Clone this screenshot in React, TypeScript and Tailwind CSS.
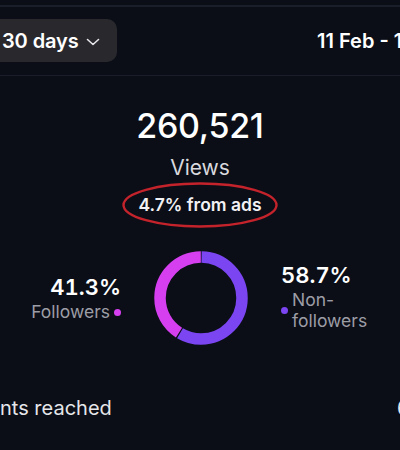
import React from "react";

function Donut() {
  const r = 41;
  const c = 2 * Math.PI * r;
  const pink = 0.413;
  const gap = 1.2;
  return (
    <svg width="96" height="96" viewBox="0 0 96 96" className="shrink-0">
      <g transform="rotate(-90 48 48)">
        <circle
          cx="48"
          cy="48"
          r={r}
          fill="none"
          stroke="#7b45f2"
          strokeWidth="11.5"
          strokeDasharray={`${c * (1 - pink) - gap} ${c}`}
          strokeDashoffset={-gap / 2}
        />
        <circle
          cx="48"
          cy="48"
          r={r}
          fill="none"
          stroke="#d63ff0"
          strokeWidth="11.5"
          strokeDasharray={`${c * pink - gap} ${c}`}
          strokeDashoffset={-(c * (1 - pink) + gap / 2)}
        />
      </g>
    </svg>
  );
}

export default function App() {
  return (
    <div
      className="w-[400px] h-[450px] bg-[#0b0e17] overflow-hidden text-white"
      style={{ fontFamily: "Inter, 'Noto Sans', sans-serif" }}
    >
      <div className="h-[5px]" />
      <div className="h-[1.5px] bg-[#1a1e2b]" />
      {/* header */}
      <div className="h-[68px] flex items-center">
        <div className="-ml-[20px] pl-[22px] pr-[17px] h-[43px] rounded-[10px] bg-[#29292d] flex items-center gap-[7px]">
          <span className="text-[20px] font-semibold tracking-[-0.1px] whitespace-nowrap">30 days</span>
          <svg width="14" height="8" viewBox="0 0 14 8" className="mt-[2px]">
            <path d="M1.5 1.5 L7 6.5 L12.5 1.5" fill="none" stroke="#e6e6ea" strokeWidth="1.6" strokeLinecap="round" strokeLinejoin="round" />
          </svg>
        </div>
        <div className="flex-1" />
        <div className="w-[83px] shrink-0 whitespace-nowrap text-[20px] font-semibold">11 Feb - 12 Mar</div>
      </div>
      <div className="h-[1.5px] bg-[#1a1e2b]" />

      {/* views */}
      <div className="flex flex-col items-center pt-[30px]">
        <div className="text-[34px] leading-[40px] font-medium tracking-[-0.3px]">260,521</div>
        <div className="text-[21px] leading-[26px] mt-[9px] text-[#d9d9de]">Views</div>
        <div className="relative mt-[2px] flex items-center justify-center w-[156px] h-[44px]">
          <svg width="158" height="46" viewBox="0 0 158 46" className="absolute -left-[1px] -top-[1px]">
            <ellipse cx="79" cy="23" rx="76.5" ry="21.5" fill="none" stroke="#c4232b" strokeWidth="2.4" />
          </svg>
          <span className="relative text-[17.5px] font-semibold text-[#f2f2f4]">4.7% from ads</span>
        </div>
      </div>

      {/* donut row */}
      <div className="flex items-center justify-center mt-[23px] pr-[6px]">
        <div className="flex flex-col items-end w-[120px]">
          <div className="text-[22px] leading-[28px] font-semibold tabular-nums">41.3%</div>
          <div className="flex items-center gap-[4px]">
            <span className="text-[17.5px] leading-[22px] text-[#9d9da6]">Followers</span>
            <span className="w-[7px] h-[7px] rounded-full bg-[#d63ff0]" />
          </div>
        </div>
        <div className="w-[32px]" />
        <Donut />
        <div className="w-[32px]" />
        <div className="flex flex-col items-start w-[112px] -mt-[4px]">
          <div className="text-[22px] leading-[28px] font-semibold tabular-nums">58.7%</div>
          <div className="flex items-center gap-[4px]">
            <span className="w-[7px] h-[7px] rounded-full bg-[#7b45f2]" />
            <span className="text-[17.5px] leading-[21px] text-[#9d9da6] w-[84px]">
              Non-
              <br />
              followers
            </span>
          </div>
        </div>
      </div>

      {/* accounts reached */}
      <div className="flex items-center mt-[47px]">
        <span className="text-[20px] text-[#e6e6ea] whitespace-nowrap">nts reached</span>
        <div className="flex-1" />
        <div className="w-[3px] shrink-0 whitespace-nowrap text-[20px] text-[#e6e6ea]">63,190</div>
      </div>
    </div>
  );
}
